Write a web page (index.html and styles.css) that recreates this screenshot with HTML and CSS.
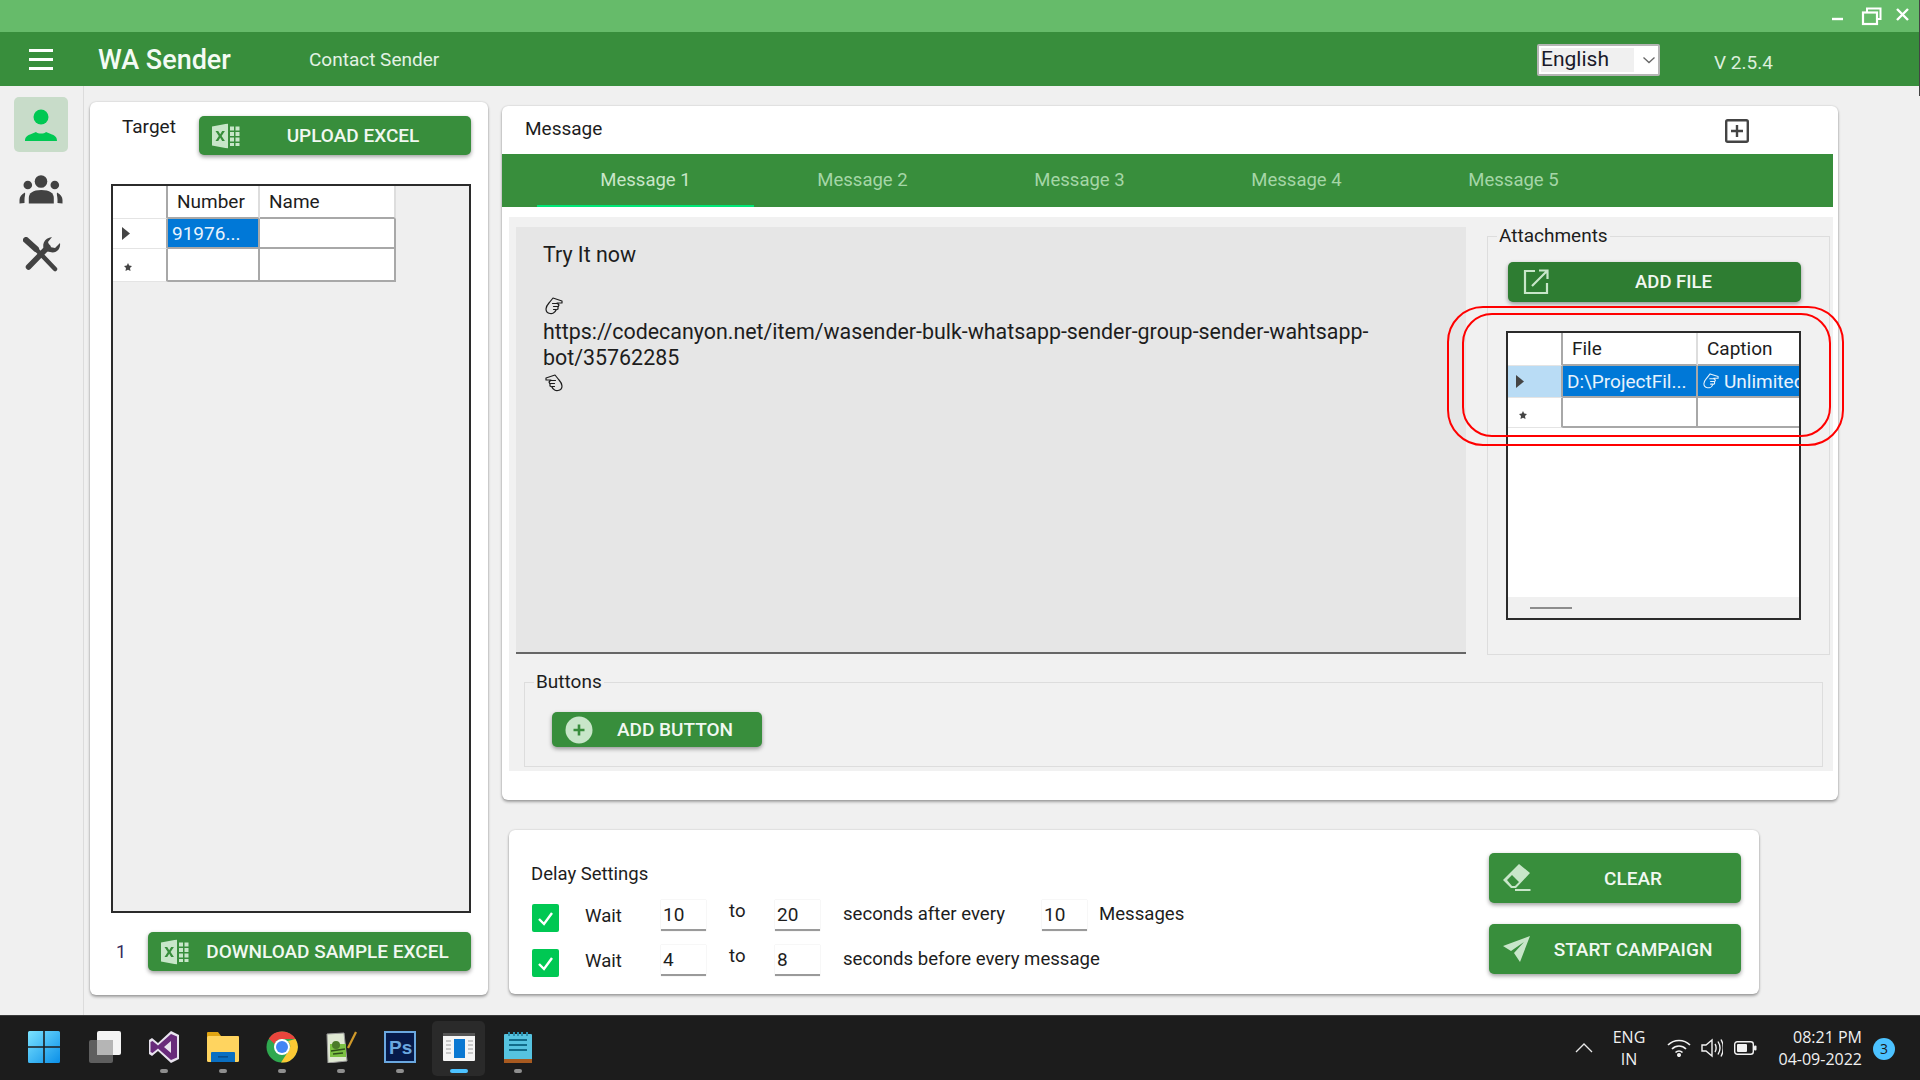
FILE: index.html
```html
<!DOCTYPE html>
<html lang="en">
<head>
<meta charset="utf-8">
<title>WA Sender</title>
<link rel="stylesheet" href="styles.css">
</head>
<body>
<svg class="defs" width="0" height="0">
  <defs>
    <g id="excel">
      <path d="M0 3 L16 0 V25 L0 22 Z M3.5 7.5 L6.8 12.5 L3.5 17.5 H6.2 L8.2 14.3 L10.2 17.5 H12.9 L9.6 12.5 L12.9 7.5 H10.2 L8.2 10.7 L6.2 7.5 Z" fill-rule="evenodd"/>
      <path d="M18 3h4v4h-4zM23.5 3h4v4h-4zM18 8.5h4v4h-4zM23.5 8.5h4v4h-4zM18 14h4v4h-4zM23.5 14h4v4h-4zM18 19.5h4v3h-4zM23.5 19.5h4v3h-4z"/>
    </g>
    <g id="hand" fill="none" stroke="currentColor" stroke-width="1.200" stroke-linejoin="round" stroke-linecap="round">
      <path d="M1 12C1 8 4 6.500 6 3.500L8 1L17 4V6H12L14 8L13 10V12L11 13C10 16 7 17 5 16.500C2 16 1 14 1 12Z"/>
      <path d="M7.500 6.500H12M8.500 9.500H13M8.500 12.500H11"/>
    </g>
    <path id="star" d="M4 0l1.200 2.400L8 3l-2 2 .5 3L4 6.700 1.500 8 2 5 0 3l2.800-.6z" fill="#444"/>
  </defs>
</svg>

<div class="titlebar">
  <svg class="win-ico" width="100" height="24" viewBox="0 0 100 24">
    <path d="M13 13h11" stroke="#fff" stroke-width="2.400" fill="none"/>
    <path d="M48 6V2.500h13.500V13H58" stroke="#fff" stroke-width="2" fill="none"/>
    <rect x="44" y="6.500" width="14" height="11.500" stroke="#fff" stroke-width="2.200" fill="none"/>
    <path d="M78 3l11 11M89 3L78 14" stroke="#fff" stroke-width="2.400" fill="none"/>
  </svg>
</div>

<header class="appbar">
  <div class="burger"><span></span><span></span><span></span></div>
  <div class="brand">WA Sender</div>
  <div class="subtitle">Contact Sender</div>
  <div class="spacer"></div>
  <div class="lang">
    <div class="lang-text">English</div>
    <svg width="14" height="8" viewBox="0 0 14 8"><path d="M1.500 1.500L7 6.500l5.500-5" stroke="#666" stroke-width="1.300" fill="none"/></svg>
  </div>
  <div class="version">V 2.5.4</div>
</header>
<div class="edge"></div>

<main class="main">
  <nav class="sidebar">
    <div class="side-item active">
      <svg width="36" height="36" viewBox="0 0 36 36" fill="#00c853"><circle cx="18" cy="10" r="7.500"/><path d="M2 34c0-3 1-5 5-6.500l6-2.500c2 2 8 2 10 0l6 2.500c4 1.500 5 3.500 5 6.500z"/></svg>
    </div>
    <div class="side-item side-group">
      <svg width="46" height="30" viewBox="0 0 46 30" fill="#424242"><circle cx="23" cy="6.500" r="6.300"/><circle cx="9.800" cy="10" r="4.300"/><circle cx="36.800" cy="10" r="4.300"/><path d="M10.800 28.500V23c0-5 4-8 12.500-8s12.500 3 12.500 8v5.500z"/><path d="M1.500 28.500V25c0-3 2-6 5.500-7.500.5 2-.5 4-.5 7v3.500zM44.500 28.500V25c0-3-2-6-5.500-7.500-.5 2 .5 4 .5 7v3.500z"/></svg>
    </div>
    <div class="side-item side-tools">
      <svg width="38" height="36" viewBox="0 0 38 36" fill="none" stroke="#424242" stroke-linecap="round"><path d="M3 3l10 9" stroke-width="6"/><path d="M11 10l21 22" stroke-width="4.500"/><path d="M5.500 30L25 10" stroke-width="5.500"/><path d="M22 14C18 8 21 1 29 0L25 5l2 5 5 1 5-5c1 6-4 11-10 9z" fill="#424242" stroke="none"/></svg>
    </div>
  </nav>

  <section class="card target">
    <div class="target-top">
      <div class="target-label">Target</div>
      <div class="btn btn-upload">
        <svg class="btn-ico" width="28" height="25" viewBox="0 0 28 25" fill="#c8e6c9"><use href="#excel"/></svg>
        <span>UPLOAD EXCEL</span>
      </div>
    </div>
    <div class="grid-box grid-left">
      <div class="dg dg-left">
        <div class="c rh"></div><div class="c h">Number</div><div class="c h">Name</div>
        <div class="c rh"><svg width="8" height="13" viewBox="0 0 8 13"><path d="M0 0l8 6.500L0 13z" fill="#444"/></svg></div><div class="c sel">91976...</div><div class="c"></div>
        <div class="c rh star"><svg width="8" height="8" viewBox="0 0 8 8"><use href="#star"/></svg></div><div class="c"></div><div class="c"></div>
      </div>
    </div>
    <div class="target-foot">
      <div class="count">1</div>
      <div class="btn btn-sample">
        <svg class="btn-ico" width="28" height="25" viewBox="0 0 28 25" fill="#c8e6c9"><use href="#excel"/></svg>
        <span>DOWNLOAD SAMPLE EXCEL</span>
      </div>
    </div>
  </section>

  <div class="right-col">
    <section class="card message">
      <div class="msg-head">
        <div class="msg-title">Message</div>
        <svg width="24" height="24" viewBox="0 0 24 24" fill="none" stroke="#444" stroke-width="2.400"><rect x="1.200" y="1.200" width="21.600" height="21.600" rx="1.500"/><path d="M12 6v12M6 12h12"/></svg>
      </div>
      <div class="tabs">
        <div class="tab active">Message 1</div>
        <div class="tab">Message 2</div>
        <div class="tab">Message 3</div>
        <div class="tab">Message 4</div>
        <div class="tab">Message 5</div>
      </div>
      <div class="panel">
        <div class="panel-top">
          <div class="editor">
            <div>Try It now</div>
            <div>&nbsp;</div>
            <div class="hand-line"><svg width="18" height="18" viewBox="0 0 18 18"><use href="#hand"/></svg></div>
            <div>https://codecanyon.net/item/wasender-bulk-whatsapp-sender-group-sender-wahtsapp-</div>
            <div>bot/35762285</div>
            <div class="hand-line"><svg class="flip" width="18" height="18" viewBox="0 0 18 18"><use href="#hand"/></svg></div>
          </div>
          <fieldset class="fs attach">
            <legend>Attachments</legend>
            <div class="btn btn-addfile">
              <svg class="btn-ico" width="26" height="26" viewBox="0 0 26 26" fill="none" stroke="#c8e6c9" stroke-width="2.200"><path d="M12 2H2v22h22V14"/><path d="M9 17L24 2M16 1.500h8.500V10"/></svg>
              <span>ADD FILE</span>
            </div>
            <div class="grid-box grid-attach">
              <div class="dg dg-attach">
                <div class="c rh"></div><div class="c h">File</div><div class="c h">Caption</div>
                <div class="c rh rh-sel"><svg width="8" height="13" viewBox="0 0 8 13"><path d="M0 0l8 6.500L0 13z" fill="#444"/></svg></div><div class="c sel">D:\ProjectFil...</div><div class="c sel cap"><svg width="16" height="16" viewBox="0 0 18 18"><use href="#hand"/></svg><span>Unlimited</span></div>
                <div class="c rh star"><svg width="8" height="8" viewBox="0 0 8 8"><use href="#star"/></svg></div><div class="c"></div><div class="c"></div>
              </div>
              <div class="hscroll"><div class="thumb"></div></div>
            </div>
          </fieldset>
        </div>
        <fieldset class="fs buttons">
          <legend>Buttons</legend>
          <div class="btn btn-addbtn">
            <svg class="btn-ico" width="28" height="28" viewBox="0 0 28 28"><circle cx="14" cy="14" r="13.500" fill="#c8e6c9"/><path d="M14 8.500v11M8.500 14h11" stroke="#388e3c" stroke-width="2.600"/></svg>
            <span>ADD BUTTON</span>
          </div>
        </fieldset>
      </div>
    </section>

    <section class="card delay">
      <div class="delay-left">
        <div class="delay-title">Delay Settings</div>
        <div class="delay-row">
          <div class="chk"><svg width="17" height="15" viewBox="0 0 17 15"><path d="M2 8l5 5 8-11" stroke="#fff" stroke-width="2.400" fill="none"/></svg></div>
          <div class="wait">Wait</div><div class="num">10</div><div class="to">to</div><div class="num">20</div>
          <div class="txt">seconds after every</div><div class="num">10</div><div class="msgs">Messages</div>
        </div>
        <div class="delay-row">
          <div class="chk"><svg width="17" height="15" viewBox="0 0 17 15"><path d="M2 8l5 5 8-11" stroke="#fff" stroke-width="2.400" fill="none"/></svg></div>
          <div class="wait">Wait</div><div class="num">4</div><div class="to">to</div><div class="num">8</div>
          <div class="txt txt-long">seconds before every message</div>
        </div>
      </div>
      <div class="delay-right">
        <div class="btn btn-action">
          <svg class="btn-ico" width="28" height="28" viewBox="0 0 28 28" fill="#c8e6c9"><path d="M16 0l11 9-14 15H8l-8-8zM4 16l5-5 7 7-4 4H9z" fill-rule="evenodd"/><rect x="12" y="25" width="15.500" height="2"/></svg>
          <span>CLEAR</span>
        </div>
        <div class="btn btn-action">
          <svg class="btn-ico" width="28" height="28" viewBox="0 0 28 28" fill="#c8e6c9"><path d="M27 1L0 11l8 5L21 7 11 18l6 9z"/></svg>
          <span>START CAMPAIGN</span>
        </div>
      </div>
    </section>
  </div>
</main>

<footer class="taskbar">
  <div class="tb-slot tb-start">
    <svg width="32" height="32" viewBox="0 0 32 32"><defs><linearGradient id="win" x1="0" y1="0" x2="1" y2="1"><stop offset="0" stop-color="#7be3ff"/><stop offset="1" stop-color="#0a8fe8"/></linearGradient></defs><path d="M0 1.500A1.500 1.500 0 0 1 1.500 0H15.200V15.200H0zM16.800 0H30.500A1.500 1.500 0 0 1 32 1.500V15.200H16.800zM0 16.800H15.200V32H1.500A1.500 1.500 0 0 1 0 30.500zM16.800 16.800H32V30.500A1.500 1.500 0 0 1 30.500 32H16.800z" fill="url(#win)"/></svg>
  </div>
  <div class="tb-slot">
    <svg width="32" height="32" viewBox="0 0 32 32"><rect x="0" y="9" width="24" height="23" rx="2" fill="#5e5e5e"/><rect x="8" y="0" width="24" height="24" rx="2" fill="#f4f4f4"/><rect x="8" y="9" width="16" height="15" fill="#b5b5b5"/></svg>
  </div>
  <div class="tb-slot on">
    <svg width="32" height="32" viewBox="0 0 32 32"><path d="M23 0l8 4v24l-8 4-13-12-6 5-3-2V9l3-2 6 5z" fill="#e8e3ee"/><path d="M23 3l6 2.500v21L23 29 10 17.500 4.500 22 2.500 21V11l2-1L10 14.500zM23 10l-7 6 7 6z" fill="#682a7a" fill-rule="evenodd"/></svg>
    <i class="dot"></i>
  </div>
  <div class="tb-slot on">
    <svg width="32" height="32" viewBox="0 0 32 32"><path d="M0 2a1 1 0 0 1 1-1h10l3 4h17a1 1 0 0 1 1 1v6H0z" fill="#e0a412"/><rect y="5" width="32" height="26" rx="1.500" fill="#ffd45f"/><path d="M5 21h22a1 1 0 0 1 1 1v9H4v-9a1 1 0 0 1 1-1z" fill="#0a6fc2"/><rect x="11" y="25" width="10" height="1.600" fill="#084d8c"/></svg>
    <i class="dot"></i>
  </div>
  <div class="tb-slot on">
    <svg width="32" height="32" viewBox="0 0 32 32"><circle cx="16" cy="16" r="15.500" fill="#2fa84f"/><path d="M16 .5A15.500 15.500 0 0 1 29.500 8H16a8 8 0 0 0-7.500 5L2.800 7.500A15.500 15.500 0 0 1 16 .5z" fill="#e8453c"/><path d="M29.500 8A15.500 15.500 0 0 1 15 31.500L22.500 20A8 8 0 0 0 22 10z" fill="#fcc934"/><circle cx="16" cy="16" r="8" fill="#fff"/><circle cx="16" cy="16" r="6" fill="#4285f4"/></svg>
    <i class="dot"></i>
  </div>
  <div class="tb-slot on">
    <svg width="32" height="32" viewBox="0 0 32 32"><path d="M2 3l17-1 3 28-19 2z" fill="#dfe8d2" stroke="#9a9a9a"/><rect x="5" y="13" width="16" height="13" fill="#7bc043"/><circle cx="11" cy="14" r="4" fill="#4b7a2a"/><path d="M6 20l14-2M8 23l10-1" stroke="#2f4f1a" stroke-width="1.500"/><path d="M23 17L31 1" stroke="#d19a2a" stroke-width="2.200"/></svg>
    <i class="dot"></i>
  </div>
  <div class="tb-slot on">
    <svg width="32" height="32" viewBox="0 0 32 32"><rect width="32" height="32" fill="#6aa8e0"/><rect x="2" y="2" width="28" height="28" fill="#061a4a"/><text x="5" y="23" class="ps">Ps</text></svg>
    <i class="dot"></i>
  </div>
  <div class="tb-slot on current">
    <svg width="32" height="28" viewBox="0 0 32 28"><rect width="32" height="28" rx="1" fill="#f5f5f5"/><rect width="32" height="3" fill="#555"/><rect x="11" y="6" width="11" height="19" fill="#0a78d2"/><path d="M3 8h5M3 12h5M3 16h5M3 20h5M25 8h5M25 12h5M25 16h5M25 20h5" stroke="#bbb" stroke-width="1.500"/></svg>
    <i class="dot wide"></i>
  </div>
  <div class="tb-slot on">
    <svg width="28" height="32" viewBox="0 0 28 32"><path d="M1 3h26a1 1 0 0 1 1 1v28H0V4a1 1 0 0 1 1-1z" fill="#56c3e0"/><rect y="28" width="28" height="4" fill="#a85a20"/><path d="M5 9h18M5 14h18M5 19h18" stroke="#126c8a" stroke-width="1.800"/><path d="M5 1v4M10 1v4M14 1v4M18 1v4M23 1v4" stroke="#2b8fae" stroke-width="2"/></svg>
    <i class="dot"></i>
  </div>
  <div class="spacer"></div>
  <svg class="tray-chevron" width="18" height="10" viewBox="0 0 18 10"><path d="M1 9l8-8 8 8" stroke="#e8e8e8" stroke-width="1.300" fill="none"/></svg>
  <div class="tray-lang"><div>ENG</div><div>IN</div></div>
  <svg class="tray-wifi" width="24" height="18" viewBox="0 0 24 18" fill="none" stroke="#f2f2f2" stroke-width="1.700"><path d="M1 6c6-6 16-6 22 0M5 10c4-4 10-4 14 0M8.500 13.500c2-2 5-2 7 0"/><circle cx="12" cy="16" r="1.200" fill="#f2f2f2"/></svg>
  <svg class="tray-vol" width="22" height="20" viewBox="0 0 22 20" fill="none" stroke="#f2f2f2" stroke-width="1.400"><path d="M1 7h4l6-5v16l-6-5H1z"/><path d="M14 6c1.500 2 1.500 6 0 8M17 3.500c2.500 4 2.500 9 0 13M20 1.500c3 5 3 12 0 17"/></svg>
  <svg class="tray-bat" width="23" height="14" viewBox="0 0 23 14"><rect x=".7" y=".7" width="18.600" height="12.600" rx="2.500" fill="none" stroke="#f2f2f2" stroke-width="1.400"/><rect x="3" y="3" width="10" height="8" rx="1" fill="#f2f2f2"/><rect x="20" y="4.500" width="2.500" height="5" rx="1" fill="#f2f2f2"/></svg>
  <div class="clock"><div>08:21 PM</div><div>04-09-2022</div></div>
  <div class="badge">3</div>
</footer>

<div class="ring ring-outer"></div>
<div class="ring ring-inner"></div>
</body>
</html>
```

FILE: styles.css
```css
* { box-sizing: border-box; }
html, body { margin: 0; padding: 0; }
body {
  width: 1920px;
  height: 1080px;
  overflow: hidden;
  background: #f0f0f0;
  font-family: Roboto, "Liberation Sans", sans-serif;
  color: #1d1d1d;
  display: flex;
  flex-direction: column;
  position: relative;
}
.defs { position: absolute; }
.spacer { flex: 1; }

.titlebar { height: 32px; background: #66bb6a; display: flex; justify-content: flex-end; align-items: flex-start; padding-top: 6px; }
.win-ico { margin-right: 1px; }

.appbar { height: 54px; background: #388e3c; display: flex; align-items: center; color: #fff; }
.burger { width: 24px; margin-left: 29px; display: flex; flex-direction: column; gap: 6px; margin-top: 1px; }
.burger span { display: block; height: 3px; background: #fff; }
.brand { margin-left: 45px; font-size: 27px; font-weight: 500; color: #f4fbf4; width: 134px; white-space: nowrap; margin-top: 1px; }
.subtitle { margin-left: 77px; font-size: 19px; color: #e3f2e4; }
.lang { width: 123px; height: 32px; background: #fff; border: 2px solid #b5b5b5; border-radius: 2px; display: flex; align-items: center; padding: 2px; margin: 2px 0 0 3px; }
.lang-text { width: 93px; height: 24px; background: #f0f0f0; color: #1a1a2a; font-size: 21px; line-height: 23px; }
.lang svg { margin-left: 8px; }
.version { margin-left: 54px; margin-right: 146px; font-size: 19px; color: #dcefdd; margin-top: 6px; width: 60px; white-space: nowrap; }
.edge { position: absolute; top: 0; right: 0; width: 1px; height: 96px; background: #444; }

.main { flex: 1; display: flex; min-height: 0; }
.sidebar { width: 84px; border-right: 1px solid #dcdcdc; padding: 11px 0 0 14px; display: flex; flex-direction: column; }
.side-item { width: 54px; height: 55px; display: flex; align-items: center; justify-content: center; flex: none; }
.side-group { margin-top: 10px; }
.side-tools { margin-top: 10px; padding-left: 2px; }
.side-item.active { background: #c8dcc9; border-radius: 5px; }

.card { background: #fff; border-radius: 6px; box-shadow: 0 0 2px rgba(0,0,0,.18), 0 2px 3px rgba(0,0,0,.32); }

.btn { display: flex; align-items: center; background: #388e3c; color: #f1f8f1; border-radius: 5px; box-shadow: 0 2px 4px rgba(0,0,0,.38); font-size: 19px; font-weight: 500; white-space: nowrap; position: relative; }
.btn-ico { position: absolute; left: 13px; top: 50%; transform: translateY(-50%); }
.btn span { flex: 1; text-align: center; }

.target { width: 398px; height: 893px; margin: 16px 0 0 6px; padding: 14px 17px 0 21px; }
.target-top { display: flex; height: 39px; }
.target-label { width: 88px; padding-left: 11px; line-height: 22px; font-size: 19px; }
.btn-upload { width: 272px; height: 39px; }
.btn-upload span { padding-left: 36px; }
.grid-box { border: 2px solid #2b2b2b; }
.grid-left { margin-top: 29px; width: 360px; height: 729px; background: #efefef; }
.dg { display: grid; font-size: 19px; }
.dg-left { grid-template-columns: 55px 92px 136px; grid-template-rows: 33px 30px 33px; }
.c { border-right: 2px solid #a8a8a8; border-bottom: 2px solid #a8a8a8; background: #fff; display: flex; align-items: center; padding-left: 4px; white-space: nowrap; overflow: hidden; }
.h { border-right-color: #ddd; padding-left: 9px; }
.rh { border-right-color: #a8a8a8; border-bottom: 1px solid #e4e4e4; padding-left: 9px; }
.star { padding: 4px 0 0 11px; }
.sel { background: #0078d7; color: #e8f3fc; }
.rh-sel { background: #b9dcf5; }
.target-foot { margin-top: 19px; display: flex; align-items: center; }
.count { width: 37px; padding-left: 5px; font-size: 18px; color: #352a5a; }
.btn-sample { width: 323px; height: 39px; }
.btn-sample span { padding-left: 36px; }

.right-col { margin-left: 14px; padding-top: 20px; display: flex; flex-direction: column; }
.message { width: 1336px; height: 694px; }
.msg-head { height: 48px; display: flex; align-items: center; justify-content: space-between; padding: 2px 89px 0 23px; }
.msg-title { font-size: 19px; margin-top: -6px; }
.tabs { width: 1331px; height: 53px; background: #388e3c; display: flex; padding-left: 35px; }
.tab { width: 217px; text-align: center; line-height: 53px; font-size: 18.500px; color: #a5d6a7; }
.tab.active { color: #c8e6c9; border-bottom: 2px solid #00e676; }
.panel { margin: 10px 0 0 7px; width: 1324px; height: 554px; background: #f1f1f1; padding: 10px 0 0 7px; }
.panel-top { display: flex; align-items: flex-start; }
.editor { width: 950px; height: 427px; background: #e6e6e6; border-bottom: 2px solid #666; padding: 15px 27px; font-size: 21.400px; line-height: 25.700px; white-space: nowrap; }
.hand-line { height: 25.700px; display: flex; align-items: center; padding-left: 2px; }
.flip { transform: scaleX(-1); }

.fs { border: 1px solid #dddddd; margin: 0; min-width: 0; }
.fs legend { font-size: 19px; line-height: 22px; padding: 0 2px; }
.attach { width: 343px; height: 430px; margin-left: 21px; margin-top: -2px; padding: 15px 0 0 20px; }
.attach legend { margin-left: -11px; }
.btn-addfile { width: 293px; height: 40px; background: #2e7d32; font-size: 18.500px; }
.btn-addfile span { padding-left: 38px; }
.btn-addfile .btn-ico { left: 15px; }
.grid-attach { margin: 29px 0 0 -2px; width: 295px; height: 289px; background: #fff; position: relative; overflow: hidden; }
.dg-attach { grid-template-columns: 55px 135px 110px; grid-template-rows: 33px 32px 30px; }
.dg-attach .rh { padding-left: 8px; }
.dg-attach .h { padding-left: 9px; }
.dg-attach .star { padding: 4px 0 0 11px; }
.cap { gap: 5px; padding-left: 5px; border-right: 0; }
.dg-attach .h:last-child { border-right: 0; }
.hscroll { position: absolute; left: 0; right: 0; bottom: 0; height: 21px; background: #f0f0f0; }
.thumb { position: absolute; left: 22px; top: 10px; width: 42px; height: 2px; background: #8c8c8c; }
.buttons { width: 1299px; height: 96px; margin: 16px 0 0 8px; padding: 19px 0 0 27px; }
.buttons legend { margin-left: -18px; }
.btn-addbtn { width: 210px; height: 35px; }
.btn-addbtn span { padding-left: 36px; }

.delay { margin: 30px 0 0 7px; width: 1250px; height: 164px; display: flex; padding: 33px 18px 0 22px; }
.delay-left { flex: 1; }
.delay-title { font-size: 18.500px; line-height: 22px; }
.delay-row { display: flex; height: 31px; margin-top: 14px; font-size: 18.600px; align-items: center; }
.delay-title + .delay-row { margin-top: 15px; }
.chk { width: 27px; height: 28px; background: #00c853; border-radius: 2px; margin: 5px 26px 0 1px; display: flex; align-items: center; justify-content: center; flex: none; }
.wait { width: 76px; flex: none; }
.num { width: 45px; height: 31px; flex: none; background: #fff; border-bottom: 2px solid #9a9a9a; box-shadow: 0 0 1px rgba(0,0,0,.2); padding-left: 2px; line-height: 29px; font-size: 19px; }
.to { width: 69px; padding-left: 23px; margin-top: -10px; flex: none; }
.txt { width: 199px; margin-left: 23px; margin-top: -3px; flex: none; }
.txt-long { width: auto; }
.msgs { margin-left: 12px; margin-top: -3px; }
.delay-right { width: 252px; margin-top: -10px; display: flex; flex-direction: column; gap: 21px; }
.btn-action { width: 252px; height: 50px; }
.btn-action .btn-ico { left: 14px; }
.btn-action span { padding-left: 36px; }

.taskbar { height: 65px; background: #1c1c1c; border-top: 1px solid #3a3a3a; display: flex; padding-left: 16px; color: #f0f0f0; align-items: center; font-family: "Open Sans", "Noto Sans", sans-serif; }
.tb-slot { width: 59px; height: 64px; display: flex; flex-direction: column; align-items: center; padding-top: 15px; flex: none; position: relative; }
.tb-start { margin-left: -2px; margin-right: 2px; }
.tb-slot .dot { position: absolute; top: 53px; width: 8px; height: 4px; border-radius: 2px; background: #8e8e8e; }
.tb-slot .dot.wide { width: 18px; background: #4cc2ff; }
.tb-slot.current::before { content: ""; position: absolute; left: 3px; right: 3px; top: 5px; height: 55px; background: #2a2a2a; border-radius: 5px; }
.tb-slot.current svg { position: relative; margin-top: 2px; }
.ps { font: 700 19px "Liberation Sans", sans-serif; fill: #6aa8e0; }
.tray-chevron { margin-right: 11px; }
.tray-lang { width: 50px; text-align: center; font-size: 16px; line-height: 22px; margin-right: 13px; }
.tray-wifi { margin-right: 10px; }
.tray-vol { margin-right: 11px; }
.tray-bat { margin-right: 21px; }
.clock { text-align: right; font-size: 16px; line-height: 22px; width: 84px; white-space: nowrap; }
.badge { width: 22px; height: 22px; border-radius: 50%; background: #4cc2ff; color: #1a1a1a; font-size: 14px; line-height: 22px; text-align: center; margin: 2px 25px 0 11px; }

.ring { position: absolute; border: 2px solid #f00; background: transparent; pointer-events: none; }
.ring-outer { left: 1447px; top: 306px; width: 397px; height: 140px; border-radius: 36px; }
.ring-inner { left: 1462px; top: 313px; width: 369px; height: 124px; border-radius: 30px; }
```
